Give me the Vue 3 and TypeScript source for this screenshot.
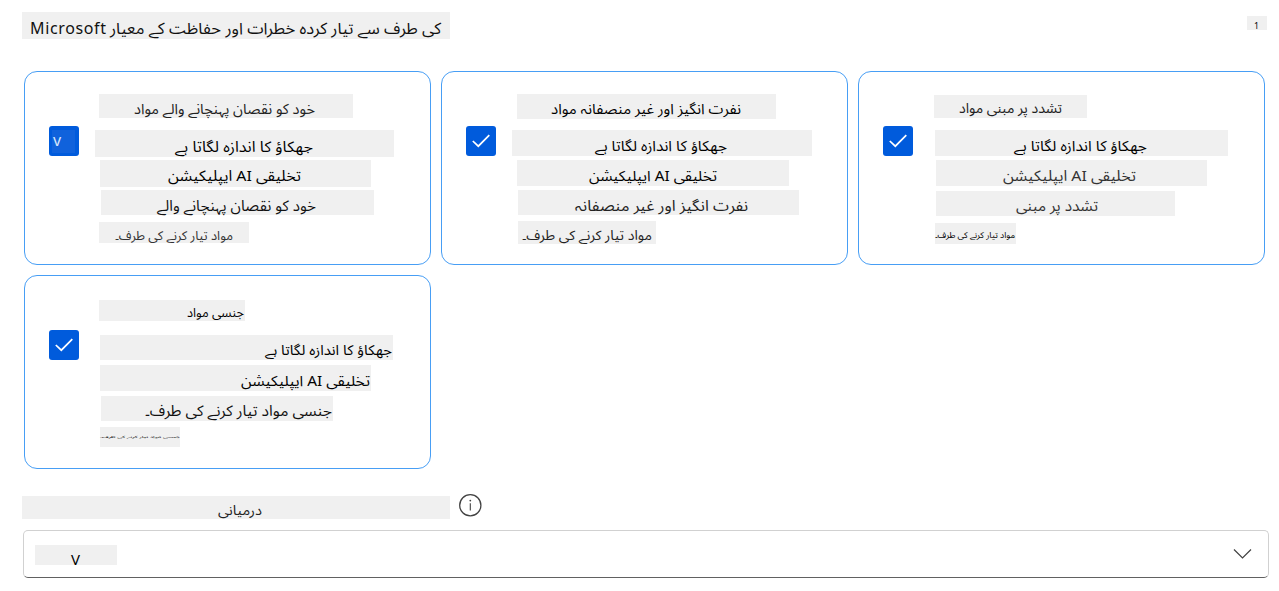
<script setup lang="ts">
interface Line {
  text: string
  left: number
  gap: number
  width: number
  height: number
  textX: number
  textW: number
  base: number
  size: number
  tone: string
}

interface Card {
  glyph: 'letter' | 'check'
  lines: Line[]
}

function line(
  text: string, left: number, gap: number, width: number, height: number,
  textX: number, textW: number, base: number, size: number, tone = '#000',
): Line {
  return { text, left, gap, width, height, textX, textW, base, size, tone }
}

const tendency = 'جھکاؤ کا اندازہ لگاتا ہے'
const application = 'تخلیقی AI ایپلیکیشن'
const toward = 'مواد تیار کرنے کی طرف۔'

const cards: Card[] = [
  {
    glyph: 'letter',
    lines: [
      line('خود کو نقصان پہنچانے والے مواد', 4, 0, 254, 24, 35, 181, 19.5, 14.5, '#222'),
      line(tendency, 0, 12, 299, 27, 80, 138, 21.5, 15),
      line(application, 5, 3, 271, 27, 68, 133, 21, 15),
      line('خود کو نقصان پہنچانے والے', 6, 3, 273, 25, 56, 159, 20.5, 15, '#111'),
      line(toward, 4, 7, 150, 21, 16, 118, 17.5, 12.5, '#333'),
    ],
  },
  {
    glyph: 'check',
    lines: [
      line('نفرت انگیز اور غیر منصفانہ مواد', 5, 0, 259, 25, 34, 190, 20, 14.5),
      line(tendency, 0, 11, 300, 26, 83, 132, 21, 14.5),
      line(application, 5, 4, 272, 26, 72, 128, 20.5, 14.5),
      line('نفرت انگیز اور غیر منصفانہ', 6, 4, 281, 25, 57, 173, 21, 15, '#222'),
      line(toward, 6, 6, 138, 23, 4, 130, 18.5, 13.5, '#222'),
    ],
  },
  {
    glyph: 'check',
    lines: [
      line('تشدد پر مبنی مواد', 5, 1, 153, 23, 25, 103, 18, 14, '#222'),
      line(tendency, 6, 12, 293, 26, 79, 133, 21, 14.5),
      line(application, 7, 4, 271, 26, 67, 133, 21, 15, '#333'),
      line('تشدد پر مبنی', 7, 5, 239, 25, 80, 82, 20, 15, '#333'),
      line(toward, 6, 7, 81, 21, 0, 80, 15, 8.5),
    ],
  },
  {
    glyph: 'check',
    lines: [
      line('جنسی مواد', 4, 2, 146, 21, 88, 57, 17, 12.5),
      line(tendency, 5, 14, 293, 25, 165, 127, 20, 14),
      line(application, 5, 5, 271, 26, 141, 129, 20.5, 14.5),
      line('جنسی مواد تیار کرنے کی طرف۔', 6, 5, 232, 25, 44, 187, 20, 15, '#111'),
      line('جنسی مواد تیار کرنے کی طرف۔', 5, 6, 80, 20, 0, 80, 11, 3.2),
    ],
  },
]
</script>

<template>
  <main class="page">
    <header class="head">
      <svg class="strip" width="428" height="27">
        <text x="8" y="22" font-size="16" fill="#111" textLength="76" lengthAdjust="spacing">Microsoft</text>
        <text class="urdu" x="419" y="22" font-size="16" fill="#111" textLength="331" lengthAdjust="spacingAndGlyphs">کی طرف سے تیار کردہ خطرات اور حفاظت کے معیار</text>
      </svg>
      <svg class="strip count" width="20" height="14">
        <text x="7" y="13" font-size="9.5" textLength="5" lengthAdjust="spacingAndGlyphs">1</text>
      </svg>
    </header>

    <section class="cards">
      <article v-for="(card, i) in cards" :key="i" class="card">
        <span class="box">
          <span v-if="card.glyph === 'letter'" class="letter">v</span>
          <svg v-else width="30" height="30" viewBox="0 0 30 30">
            <path d="M6.8 15L12.3 20.2L23.3 9.2" fill="none" stroke="#fff" stroke-width="1.7" />
          </svg>
        </span>
        <div class="lines">
          <svg
            v-for="(l, n) in card.lines"
            :key="n"
            class="strip"
            :width="l.width"
            :height="l.height"
            :style="{ marginLeft: l.left + 'px', marginTop: l.gap + 'px' }"
          >
            <text
              class="urdu"
              :x="l.textX + l.textW"
              :y="l.base"
              :font-size="l.size"
              :fill="l.tone"
              :textLength="l.textW"
              lengthAdjust="spacingAndGlyphs"
            >{{ l.text }}</text>
          </svg>
        </div>
      </article>
    </section>

    <div class="label">
      <svg class="strip" width="428" height="23">
        <text class="urdu" x="240" y="19" font-size="13.5" fill="#222" textLength="44" lengthAdjust="spacingAndGlyphs">درمیانی</text>
      </svg>
      <svg class="info" width="24" height="24" viewBox="0 0 24 24">
        <circle cx="12.3" cy="12.3" r="10.6" fill="none" stroke="#424242" stroke-width="1.3" />
        <path d="M12.3 10.2V17.4" stroke="#424242" stroke-width="1.1" />
        <circle cx="12.3" cy="7.6" r=".9" fill="#424242" />
      </svg>
    </div>

    <div class="select">
      <svg class="strip value" width="82" height="20">
        <text x="36" y="19.5" font-size="15" textLength="9" lengthAdjust="spacingAndGlyphs">V</text>
      </svg>
      <svg width="20" height="12" viewBox="0 0 20 12">
        <path d="M2 1.5L10.5 10L19 1.5" fill="none" stroke="#424242" stroke-width="1.2" />
      </svg>
    </div>
  </main>
</template>

<style>
body {
  margin: 0;
  background: #fff;
}
</style>

<style scoped>
.page {
  box-sizing: border-box;
  width: 1279px;
  height: 591px;
  padding: 12px 10px 0 22px;
  overflow: hidden;
  font-family: "Noto Sans", "Noto Sans Arabic", "Open Sans", "DejaVu Sans", sans-serif;
}
svg {
  display: block;
  flex: none;
  overflow: visible;
}
.strip {
  background: #f0f0f0;
}
.urdu {
  direction: rtl;
}
.head {
  display: flex;
  justify-content: space-between;
  height: 59px;
}
.count {
  margin: 4px 2px 0 0;
}
.cards {
  display: grid;
  grid-template-columns: repeat(3, 407px);
  grid-auto-rows: 194px;
  gap: 10px;
  margin-left: 2px;
}
.card {
  box-sizing: border-box;
  display: flex;
  padding: 22px 0 0 24px;
  border: 1px solid #479ef5;
  border-radius: 13px;
}
.box {
  flex: none;
  width: 30px;
  height: 30px;
  margin-top: 32px;
  border-radius: 3px;
  background: #005bdc;
}
.letter {
  display: block;
  width: 23px;
  height: 23px;
  margin: 4px 0 0 3px;
  background: #1062dc;
  color: #d5e5fb;
  font-size: 16px;
  line-height: 20px;
  text-indent: 1px;
}
.lines {
  margin-left: 16px;
}
.label {
  display: flex;
  height: 34px;
  margin-top: 27px;
}
.info {
  margin: -3px 0 0 8px;
}
.select {
  box-sizing: border-box;
  display: flex;
  align-items: center;
  justify-content: space-between;
  width: 1246px;
  height: 48px;
  margin-left: 1px;
  padding: 0 16px 0 11px;
  border: 1px solid #d1d1d1;
  border-bottom-color: #616161;
  border-radius: 5px;
}
.value {
  margin-top: 2px;
}
</style>
